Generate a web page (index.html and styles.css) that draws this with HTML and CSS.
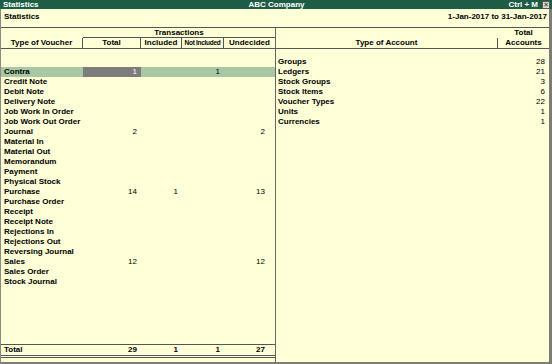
FILE: index.html
```html
<!DOCTYPE html>
<html>
  <head>
    <meta name="viewport" content="width=device-width, initial-scale=1" />
    <link rel="stylesheet" href="styles.css">
  </head>
  <body>
    <div class="window">
      <div class="titlebar">
        <span class="title-left">Statistics</span>
        <span class="title-mid">ABC Company</span>
        <span class="title-right">Ctrl + M <span class="close">&#215;</span></span>
      </div>

      <div class="info">
        <span>Statistics</span>
        <span>1-Jan-2017 to 31-Jan-2017</span>
      </div>

      <div class="main">
        <div class="vouchers">
          <div class="vhead">
            <div class="vh-name">Type of Voucher</div>
            <div class="vh-group">Transactions</div>
            <div class="vh-col">Total</div>
            <div class="vh-col">Included</div>
            <div class="vh-col vh-small">Not Included</div>
            <div class="vh-col vh-last">Undecided</div>
          </div>

          <div class="vbody">
            <div class="row selected"><span>Contra</span><span class="cur">1</span><span></span><span>1</span><span></span></div>
            <div class="row"><span>Credit Note</span><span></span><span></span><span></span><span></span></div>
            <div class="row"><span>Debit Note</span><span></span><span></span><span></span><span></span></div>
            <div class="row"><span>Delivery Note</span><span></span><span></span><span></span><span></span></div>
            <div class="row"><span>Job Work In Order</span><span></span><span></span><span></span><span></span></div>
            <div class="row"><span>Job Work Out Order</span><span></span><span></span><span></span><span></span></div>
            <div class="row"><span>Journal</span><span>2</span><span></span><span></span><span>2</span></div>
            <div class="row"><span>Material In</span><span></span><span></span><span></span><span></span></div>
            <div class="row"><span>Material Out</span><span></span><span></span><span></span><span></span></div>
            <div class="row"><span>Memorandum</span><span></span><span></span><span></span><span></span></div>
            <div class="row"><span>Payment</span><span></span><span></span><span></span><span></span></div>
            <div class="row"><span>Physical Stock</span><span></span><span></span><span></span><span></span></div>
            <div class="row"><span>Purchase</span><span>14</span><span>1</span><span></span><span>13</span></div>
            <div class="row"><span>Purchase Order</span><span></span><span></span><span></span><span></span></div>
            <div class="row"><span>Receipt</span><span></span><span></span><span></span><span></span></div>
            <div class="row"><span>Receipt Note</span><span></span><span></span><span></span><span></span></div>
            <div class="row"><span>Rejections In</span><span></span><span></span><span></span><span></span></div>
            <div class="row"><span>Rejections Out</span><span></span><span></span><span></span><span></span></div>
            <div class="row"><span>Reversing Journal</span><span></span><span></span><span></span><span></span></div>
            <div class="row"><span>Sales</span><span>12</span><span></span><span></span><span>12</span></div>
            <div class="row"><span>Sales Order</span><span></span><span></span><span></span><span></span></div>
            <div class="row"><span>Stock Journal</span><span></span><span></span><span></span><span></span></div>
          </div>

          <div class="row total"><span>Total</span><span>29</span><span>1</span><span>1</span><span>27</span></div>
        </div>

        <div class="accounts">
          <div class="ahead">
            <div class="ah-name">Type of Account</div>
            <div class="ah-count">Total<br>Accounts</div>
          </div>
          <div class="abody">
            <div class="arow"><span>Groups</span><span>28</span></div>
            <div class="arow"><span>Ledgers</span><span>21</span></div>
            <div class="arow"><span>Stock Groups</span><span>3</span></div>
            <div class="arow"><span>Stock Items</span><span>6</span></div>
            <div class="arow"><span>Voucher Types</span><span>22</span></div>
            <div class="arow"><span>Units</span><span>1</span></div>
            <div class="arow"><span>Currencies</span><span>1</span></div>
          </div>
        </div>
      </div>
    </div>
  </body>
</html>
```

FILE: styles.css
```css
html,
body {
  margin: 0;
  padding: 0;
}

body {
  font-family: "Liberation Sans", Arial, sans-serif;
  font-size: 8px;
  font-weight: 700;
  color: #000;
  background: #ffffd8;
}

.window {
  display: flex;
  flex-direction: column;
  width: 552px;
  height: 364px;
  box-sizing: border-box;
  border-left: 1px solid #8a8a80;
  border-right: 3px solid #7c7c74;
  border-bottom: 2px solid #7c7c74;
  background: #ffffd8;
}

.titlebar {
  display: flex;
  align-items: center;
  height: 9px;
  line-height: 9px;
  padding: 0 2px 0 3px;
  background: #1e5c46;
  color: #fff;
  margin-left: -1px;
  margin-right: -3px;
}

.title-left {
  flex: 1;
}

.title-mid {
  flex: none;
}

.title-right {
  flex: 1;
  display: flex;
  justify-content: flex-end;
  align-items: center;
  gap: 4px;
}

.close {
  display: inline-flex;
  align-items: center;
  justify-content: center;
  width: 6px;
  height: 6px;
  border: 1px solid #555;
  background: #d8d8d0;
  color: #444;
  font-size: 7px;
  line-height: 6px;
}

.info {
  display: flex;
  justify-content: space-between;
  height: 18px;
  padding: 3px 2px 0 3px;
  box-sizing: border-box;
  line-height: 10px;
}

.main {
  flex: 1;
  display: flex;
  border-top: 1px solid #555;
}

/* vouchers panel */

.vouchers {
  width: 274px;
  display: flex;
  flex-direction: column;
  border-right: 1px solid #666;
}

.vhead {
  display: grid;
  grid-template-columns: 82px 58px 41px 42px 1fr;
  grid-template-rows: 10px 10px;
  border-bottom: 1px solid #555;
  line-height: 10px;
  white-space: nowrap;
}

.vh-name {
  grid-row: 1 / 3;
  align-self: end;
  text-align: center;
  border-right: 1px solid #555;
}

.vh-group {
  grid-column: 2 / 6;
  text-align: center;
  border-bottom: 1px solid #555;
  line-height: 9px;
}

.vh-col {
  text-align: center;
  border-right: 1px solid #555;
}

.vh-small {
  font-size: 6.5px;
  letter-spacing: -0.3px;
}

.vh-last {
  border-right: none;
}

.vbody {
  flex: 1;
  padding-top: 18px;
}

.row {
  display: grid;
  grid-template-columns: 82px 58px 41px 42px 1fr;
  height: 10px;
  line-height: 10px;
  white-space: nowrap;
}

.row span {
  text-align: right;
  font-weight: 400;
  padding-right: 4px;
}

.row span:first-child {
  text-align: left;
  font-weight: 700;
  padding-left: 3px;
  padding-right: 0;
}

.row span:last-child {
  padding-right: 10px;
}

.selected {
  background: #a8c8a4;
}

.selected .cur {
  background: #7c7c7c;
  color: #fff;
}

.total {
  border-top: 1px solid #555;
  border-bottom: 3px double #555;
  margin-bottom: 4px;
}

.total span {
  font-weight: 700;
}

/* accounts panel */

.accounts {
  flex: 1;
  display: flex;
  flex-direction: column;
}

.ahead {
  display: grid;
  grid-template-columns: 1fr 51px;
  height: 20px;
  line-height: 10px;
  border-bottom: 1px solid #555;
}

.ah-name {
  align-self: end;
  text-align: center;
  border-right: 1px solid #555;
}

.ah-count {
  text-align: center;
}

.abody {
  padding-top: 8px;
}

.arow {
  display: flex;
  justify-content: space-between;
  height: 10px;
  line-height: 10px;
  padding: 0 4px 0 2px;
}

.arow span:last-child {
  font-weight: 400;
}
```
